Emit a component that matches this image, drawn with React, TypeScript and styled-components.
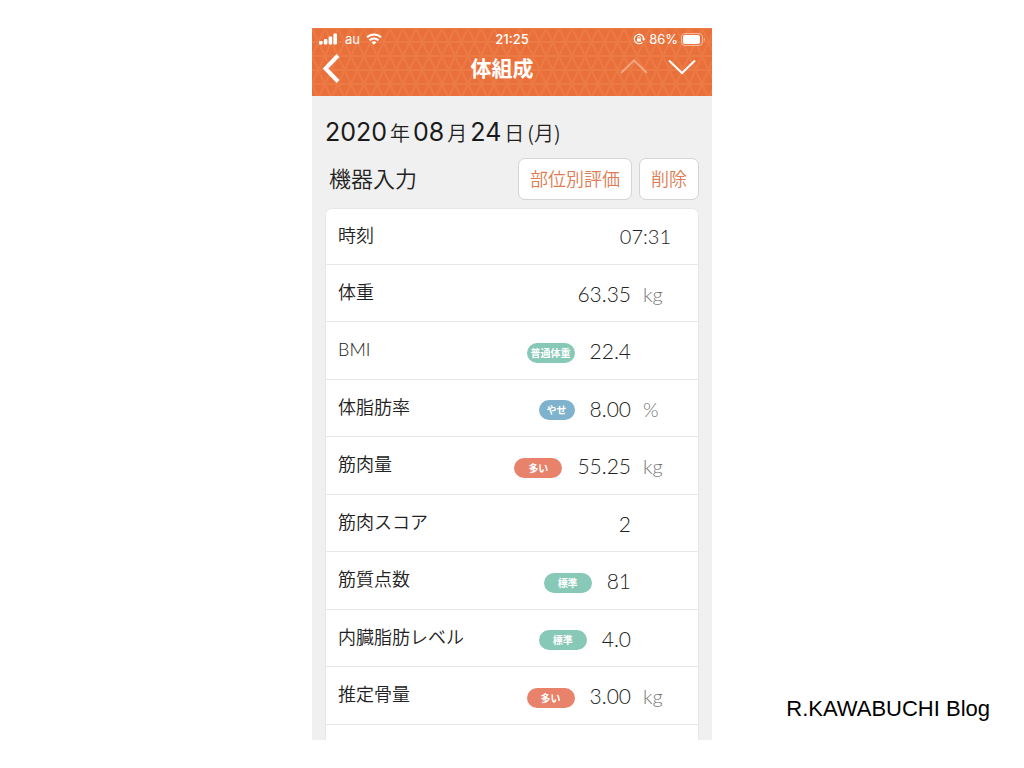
import React from "react";
import styled, { createGlobalStyle } from "styled-components";

const cjk = `"Noto Sans CJK JP", sans-serif`;

const GlobalStyle = createGlobalStyle`
  *, *::before, *::after { box-sizing: border-box; }
  body {
    margin: 0;
    background: #fff;
    color: #222;
    font-family: "Liberation Sans", ${cjk};
  }
`;

const Page = styled.div`
  display: grid;
  grid-template-columns: minmax(0, 1fr) minmax(0, 400px) minmax(0, 1fr);
  min-height: 100vh;
  padding: 28px 0;
`;

const Phone = styled.main`
  grid-column: 2;
  display: flex;
  flex-direction: column;
  background: #f0f0f0;
`;

const Credit = styled.footer`
  grid-column: 3;
  align-self: end;
  padding: 0 34px 17px 0;
  text-align: right;
  white-space: nowrap;
  font-size: 22px;
  line-height: 28px;
  color: #000;
`;

const Header = styled.header`
  display: grid;
  height: 68px;
  color: #fff;
  background: #e9703a;
`;

const Layer = styled.div`
  grid-area: 1 / 1;
  min-width: 0;
`;

const Pattern = styled.svg`
  display: block;
  width: 100%;
  height: 68px;
`;

const StatusBar = styled.div`
  display: grid;
  grid-template-columns: 1fr auto 1fr;
  align-items: center;
  height: 22px;
  padding: 0 7px;
  font-family: Inter, sans-serif;
  font-size: 13px;
  line-height: 16px;
`;

const StatusGroup = styled.div<{ $end?: boolean }>`
  display: flex;
  align-items: center;
  gap: ${(p) => (p.$end ? "3px" : "6px")};
  justify-content: ${(p) => (p.$end ? "flex-end" : "flex-start")};
`;

const Clock = styled.time`
  font-weight: 500;
`;

const NavBar = styled.nav`
  display: grid;
  grid-template-columns: 1fr auto 1fr;
  align-items: center;
  height: 36px;
  padding: 0 14px 0 8px;
`;

const Title = styled.h1`
  margin: 0;
  padding: 0 14px 2px 0;
  font: 700 21px/30px ${cjk};
`;

const NavGroup = styled.div<{ $end?: boolean }>`
  display: flex;
  gap: 18px;
  justify-content: ${(p) => (p.$end ? "flex-end" : "flex-start")};
`;

const IconButton = styled.button`
  display: flex;
  padding: 0;
  border: 0;
  background: none;
  color: inherit;

  &:disabled { opacity: 0.35; }
`;

const Content = styled.section`
  flex: 1;
  display: flex;
  flex-direction: column;
  padding: 20px 13px 0;
`;

const DateHeading = styled.h2`
  display: flex;
  align-items: baseline;
  gap: 3px;
  margin: 0;
  height: 32px;
  font: 350 20px/32px ${cjk};
  white-space: nowrap;
`;

const DateNumber = styled.span`
  font: 400 25px/32px Inter, sans-serif;
  color: #1a1a1a;
`;

const Toolbar = styled.div`
  display: flex;
  align-items: flex-start;
  gap: 7px;
  padding: 10px 0 8px 4px;
`;

const Source = styled.h3`
  flex: 1;
  margin: 0;
  font: 350 22px/38px ${cjk};
`;

const ActionButton = styled.button`
  height: 42px;
  padding: 0 11px 2px;
  border: 1px solid #d4d4d4;
  border-radius: 7px;
  background: #fff;
  color: #de7d54;
  font: 350 18px/26px ${cjk};
`;

const Card = styled.div`
  flex: 1;
  border: 1px solid #e8e8e8;
  border-bottom: 0;
  border-radius: 7px 7px 0 0;
  background: #fff;
`;

const Table = styled.table`
  width: 100%;
  border-collapse: collapse;
`;

const Row = styled.tr`
  height: 57px;
  border-bottom: 1px solid #e6e6e6;

  &:nth-child(odd) { height: 58px; }
  &:first-child { height: 55px; }
`;

const Label = styled.th<{ $latin?: boolean }>`
  padding: 0 0 2px 12px;
  text-align: left;
  font: ${(p) => (p.$latin ? 300 : 350)} 18px/26px Lato, ${cjk};
`;

const ReadingCell = styled.td`
  padding: 2px 0 0;
`;

const TimeCell = styled.td`
  padding: 0 27px 0 0;
  text-align: right;
  font: 300 20px/26px Lato, sans-serif;
`;

const Reading = styled.div`
  display: flex;
  align-items: center;
  justify-content: flex-end;
  gap: 15px;
  font: 300 21px/26px Lato, sans-serif;
`;

const UnitCell = styled.td`
  width: 67px;
  padding: 2px 0 0 12px;
  font: 300 20px/26px Lato, sans-serif;
  color: #777;
`;

const tones = { green: "#87c8b7", blue: "#7fb2cc", red: "#e8826b" };

const Pill = styled.span<{ $tone: keyof typeof tones; $narrow?: boolean }>`
  width: ${(p) => (p.$narrow ? "36px" : "48px")};
  margin-top: 3px;
  border-radius: 10px;
  background: ${(p) => tones[p.$tone]};
  color: #fff;
  text-align: center;
  font: 700 10px/20px ${cjk};
`;

type Measure = {
  label: string;
  latin?: boolean;
  value: string;
  unit?: string;
  pill?: { text: string; tone: keyof typeof tones; narrow?: boolean };
};

const measures: Measure[] = [
  { label: "体重", value: "63.35", unit: "kg" },
  { label: "BMI", latin: true, value: "22.4", pill: { text: "普通体重", tone: "green" } },
  { label: "体脂肪率", value: "8.00", unit: "%", pill: { text: "やせ", tone: "blue", narrow: true } },
  { label: "筋肉量", value: "55.25", unit: "kg", pill: { text: "多い", tone: "red" } },
  { label: "筋肉スコア", value: "2" },
  { label: "筋質点数", value: "81", pill: { text: "標準", tone: "green" } },
  { label: "内臓脂肪レベル", value: "4.0", pill: { text: "標準", tone: "green" } },
  { label: "推定骨量", value: "3.00", unit: "kg", pill: { text: "多い", tone: "red" } },
];

const TrianglePattern = () => (
  <Pattern aria-hidden="true">
    <defs>
      <pattern id="triangles" width="13" height="28" patternUnits="userSpaceOnUse">
        <path
          d="M0 0H13M0 14H13M0 28H13M0 0L6.5 14L13 0M0 28L6.5 14L13 28"
          fill="none"
          stroke="#f08350"
          strokeWidth="2"
          strokeOpacity=".5"
        />
      </pattern>
    </defs>
    <rect width="100%" height="100%" fill="url(#triangles)" />
  </Pattern>
);

const SignalIcon = () => (
  <svg width="20" height="12" viewBox="0 0 20 12" fill="currentColor" aria-hidden="true">
    <rect x="0" y="8" width="3.6" height="3.5" rx="1" />
    <rect x="4.8" y="6" width="3.6" height="5.5" rx="1" />
    <rect x="9.6" y="3.5" width="3.6" height="8" rx="1" />
    <rect x="14.4" y="0.5" width="3.6" height="11" rx="1" />
  </svg>
);

const WifiIcon = () => (
  <svg width="16" height="12" viewBox="0 0 16 12" fill="none" stroke="currentColor" strokeWidth="2" aria-hidden="true">
    <path d="M1 4.4C5 .4 11 .4 15 4.4M3.5 7.2C6 4.8 10 4.8 12.5 7.2" />
    <path d="M5.6 9.2C7 8 9 8 10.4 9.2L8 11.8Z" fill="currentColor" stroke="none" />
  </svg>
);

const LockIcon = () => (
  <svg width="13" height="12" viewBox="0 0 13 12" fill="none" stroke="currentColor" aria-hidden="true">
    <path d="M9.4 9.3A4.7 4.7 0 1 1 10.7 6" strokeWidth="1.2" />
    <path d="M9 5.4H12.4L10.7 8Z" fill="currentColor" stroke="none" />
    <rect x="4" y="5.5" width="4" height="3" fill="currentColor" stroke="none" />
    <path d="M4.8 5.6V4.5a1.2 1.2 0 0 1 2.4 0v1.1" />
  </svg>
);

const BatteryIcon = () => (
  <svg width="24" height="13" viewBox="0 0 24 13" aria-hidden="true">
    <rect x=".5" y=".5" width="21" height="12" rx="3.5" fill="none" stroke="#fff" strokeOpacity=".5" />
    <rect x="2" y="2" width="17" height="9" rx="2" fill="#fff" />
    <path d="M22.8 4.5v4c1.3-.7 1.3-3.3 0-4Z" fill="#fff" fillOpacity=".6" />
  </svg>
);

const BackIcon = () => (
  <svg width="24" height="30" viewBox="0 0 24 30" fill="none" stroke="currentColor" strokeWidth="4" aria-hidden="true">
    <path d="M18 2.5L5.5 15.500L18 28.500" />
  </svg>
);

const ChevronIcon = ({ up }: { up?: boolean }) => (
  <svg width="30" height="20" viewBox="0 0 30 20" fill="none" stroke="currentColor" strokeWidth="2" aria-hidden="true">
    <path d={up ? "M1 15L14 2.5L27 15" : "M1 2.5L14 15L27 2.5"} />
  </svg>
);

export default function App() {
  return (
    <>
      <GlobalStyle />
      <Page>
        <Phone>
          <Header>
            <Layer>
              <TrianglePattern />
            </Layer>
            <Layer>
              <StatusBar>
                <StatusGroup>
                  <SignalIcon />
                  <span>au</span>
                  <WifiIcon />
                </StatusGroup>
                <Clock>21:25</Clock>
                <StatusGroup $end>
                  <LockIcon />
                  <span>86%</span>
                  <BatteryIcon />
                </StatusGroup>
              </StatusBar>
              <NavBar>
                <NavGroup>
                  <IconButton aria-label="戻る"><BackIcon /></IconButton>
                </NavGroup>
                <Title>体組成</Title>
                <NavGroup $end>
                  <IconButton aria-label="前へ" disabled><ChevronIcon up /></IconButton>
                  <IconButton aria-label="次へ"><ChevronIcon /></IconButton>
                </NavGroup>
              </NavBar>
            </Layer>
          </Header>
          <Content>
            <DateHeading>
              <DateNumber>2020</DateNumber>
              <span>年</span>
              <DateNumber>08</DateNumber>
              <span>月</span>
              <DateNumber>24</DateNumber>
              <span>日</span>
              <span>(月)</span>
            </DateHeading>
            <Toolbar>
              <Source>機器入力</Source>
              <ActionButton>部位別評価</ActionButton>
              <ActionButton>削除</ActionButton>
            </Toolbar>
            <Card>
              <Table>
                <tbody>
                  <Row>
                    <Label scope="row">時刻</Label>
                    <TimeCell colSpan={2}>07:31</TimeCell>
                  </Row>
                  {measures.map(({ label, latin, value, unit, pill }) => (
                    <Row key={label}>
                      <Label scope="row" $latin={latin}>{label}</Label>
                      <ReadingCell>
                        <Reading>
                          {pill && <Pill $tone={pill.tone} $narrow={pill.narrow}>{pill.text}</Pill>}
                          <span>{value}</span>
                        </Reading>
                      </ReadingCell>
                      <UnitCell>{unit}</UnitCell>
                    </Row>
                  ))}
                </tbody>
              </Table>
            </Card>
          </Content>
        </Phone>
        <Credit>R.KAWABUCHI Blog</Credit>
      </Page>
    </>
  );
}
